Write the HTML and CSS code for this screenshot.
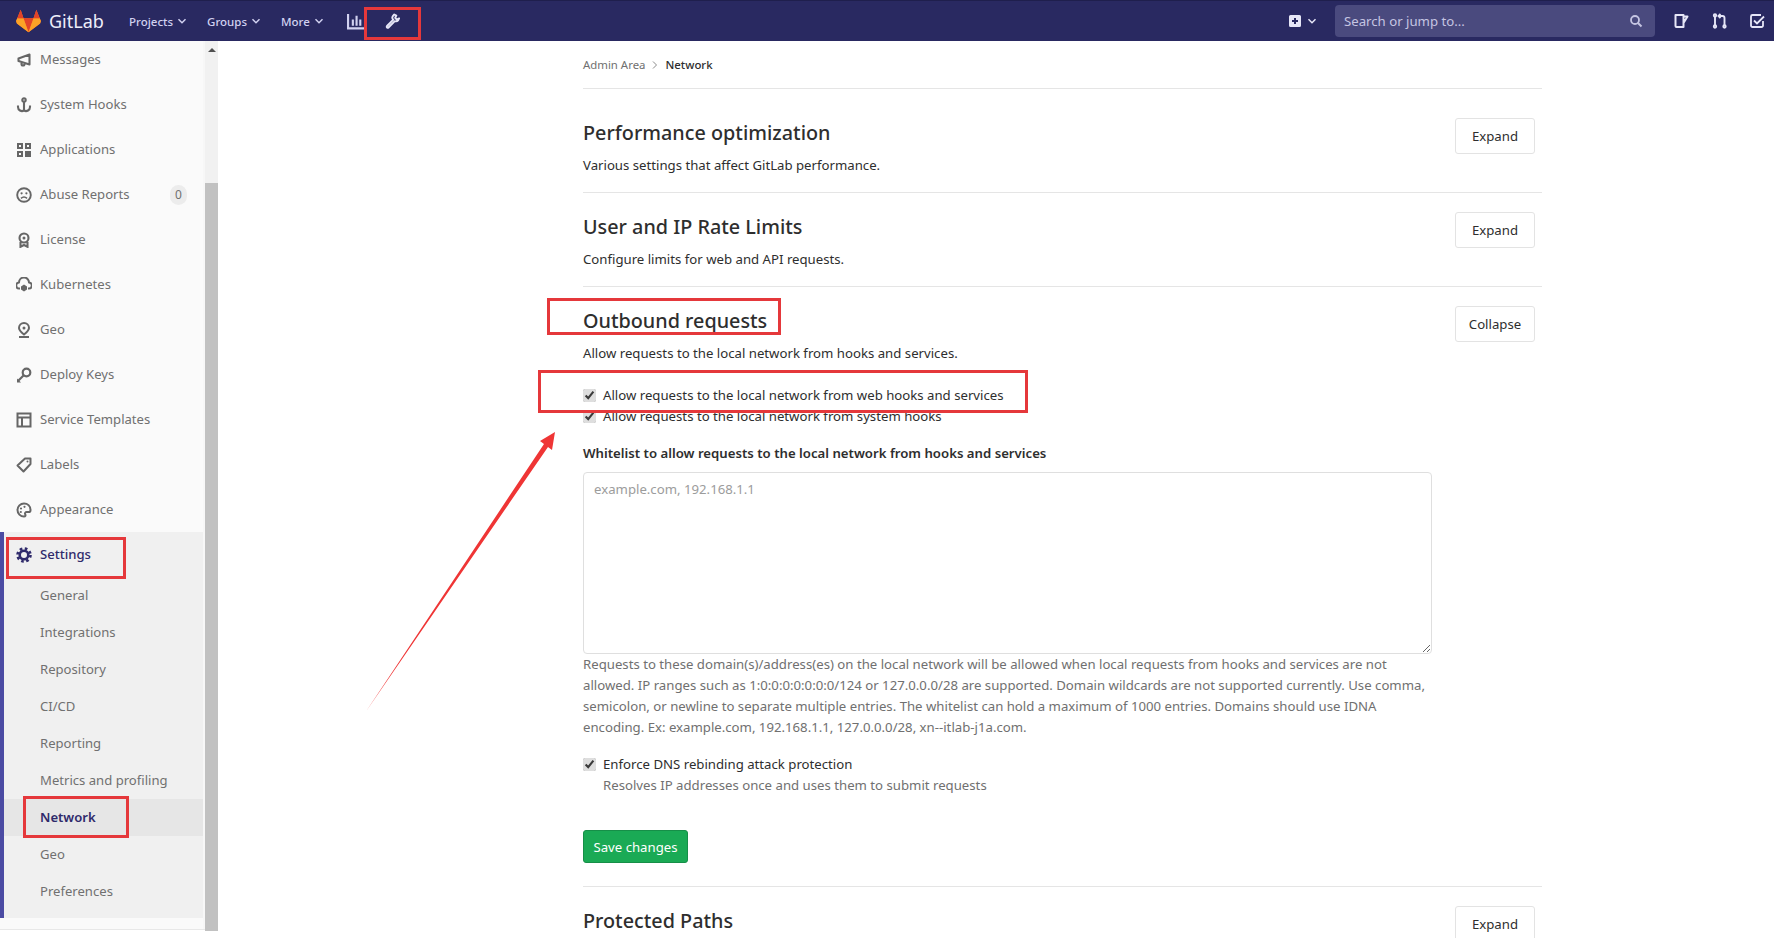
FILE: index.html
```html
<!DOCTYPE html>
<html lang="en">
<head>
<meta charset="utf-8">
<title>Network · Admin Area · GitLab</title>
<link rel="stylesheet" href="styles.css">
</head>
<body>
<svg class="sprite" width="0" height="0" aria-hidden="true">
  <symbol id="chev" viewBox="0 0 10 10"><path d="M1.5 3.3 5 6.8l3.5-3.5" fill="none" stroke="currentColor" stroke-width="1.5"/></symbol>
</svg>
<header class="topbar">
  <div class="brand">
    <svg class="logo" viewBox="0 0 28 26"><path fill="#fc6d26" d="M14 25.500 1 15.800.1 12.900 5.200.4l3.200 9.500h11.200L22.800.4l5.100 12.500-.9 2.900z"/><path fill="#e24329" d="M14 25.500 8.400 9.900h11.200z"/><path fill="#fca326" d="M1 15.800 14 25.500 8.400 9.900H1.500l-1.400 3zM27 15.800 14 25.500l5.600-15.600h6.900l1.400 3z"/><path fill="#e24329" d="M1.500 9.900h6.900L5.200.4zM26.500 9.900h-6.900L22.800.4z"/></svg>
    <span class="brand-name">GitLab</span>
  </div>
  <nav class="nav-left">
    <a class="nav-item">Projects <svg class="chev"><use href="#chev"/></svg></a>
    <a class="nav-item">Groups <svg class="chev"><use href="#chev"/></svg></a>
    <a class="nav-item">More <svg class="chev"><use href="#chev"/></svg></a>
    <svg class="nav-icon chart" viewBox="0 0 16 16"><path fill="none" stroke="currentColor" stroke-width="2" d="M1 1v13.500h15M5.500 6v6M9 2.500V12M12.500 6v6"/></svg>
    <svg class="nav-icon wrench" viewBox="0 0 16 16"><path fill="none" stroke="currentColor" stroke-width="1.900" stroke-linejoin="round" d="M10.300 1.500 8.800 3.200c-.8 1.300-.4 2.700.5 3.500L3 13a1.300 1.300 0 0 0 0 1.500c.5.400 1.100.4 1.500 0l6.300-6.400c1.200.5 2.500.2 3.300-.7l1-2-2.300 1.100-1.600-1.600 1.100-2.400z"/></svg>
  </nav>
  <div class="nav-right">
    <span class="plus-group">
      <svg class="plus" viewBox="0 0 14 14"><path fill="currentColor" fill-rule="evenodd" d="M2.500 1h9A1.500 1.500 0 0 1 13 2.500v9a1.500 1.500 0 0 1-1.500 1.500h-9A1.500 1.500 0 0 1 1 11.500v-9A1.500 1.500 0 0 1 2.500 1zM6 4v2H4v2h2v2h2V8h2V6H8V4z"/></svg>
      <svg class="chev"><use href="#chev"/></svg>
    </span>
    <div class="search">
      <span>Search or jump to...</span>
      <svg class="search-icon" viewBox="0 0 14 14"><circle cx="6" cy="6" r="4" fill="none" stroke="currentColor" stroke-width="1.800"/><path d="m9 9 3.500 3.500" stroke="currentColor" stroke-width="2"/></svg>
    </div>
    <svg class="nav-icon issue" viewBox="0 0 16 16"><path fill="none" stroke="currentColor" stroke-width="2" stroke-linejoin="round" d="M2.500 2h8v12h-7a1 1 0 0 1-1-1zM10.500 3.500H14.500L10.500 10"/></svg>
    <svg class="nav-icon mr" viewBox="0 0 16 16"><g fill="none" stroke="currentColor" stroke-width="1.900"><path d="M3 3.500v9"/><circle cx="3" cy="2.500" r="1.200"/><circle cx="3" cy="13.500" r="1.200"/><path d="M8.500 1 6.500 3l2 2M7 3h3.500A2 2 0 0 1 12.500 5v7"/><circle cx="12.500" cy="13.500" r="1.200"/></g></svg>
    <svg class="nav-icon todo" viewBox="0 0 16 16"><g fill="none" stroke="currentColor" stroke-width="1.800"><path d="M14 8v4.500a1.500 1.500 0 0 1-1.500 1.500h-9A1.500 1.500 0 0 1 2 12.500v-9A1.500 1.500 0 0 1 3.500 2H12"/><path d="m5 7.500 3 3L15 3.500"/></g></svg>
  </div>
</header>

<div class="layout">
  <aside class="sidebar">
    <div class="side-scroll">
      <ul class="side-list">
        <li class="side-row"><svg class="side-icon" viewBox="0 0 16 16"><path fill="none" stroke="currentColor" stroke-width="2.100" stroke-linejoin="round" d="M13.500 2.500v10L2.500 9V6.500zM5.500 10v2a1.500 1.500 0 0 0 3 0v-1"/></svg>Messages</li>
        <li class="side-row"><svg class="side-icon" viewBox="0 0 16 16"><g fill="none" stroke="currentColor" stroke-width="2.100"><circle cx="8" cy="3" r="1.700"/><path d="M8 5v9M2 8.500V10a4 4 0 0 0 6 3.500A4 4 0 0 0 14 10V8.500"/></g></svg>System Hooks</li>
        <li class="side-row"><svg class="side-icon" viewBox="0 0 16 16"><path fill="currentColor" fill-rule="evenodd" d="M1 1h6v6H1zM3 3v2h2V3zM9 1h6v6H9zM11 3v2h2V3zM1 9h6v6H1zM3 11v2h2v-2zM9 9h6v6H9z"/></svg>Applications</li>
        <li class="side-row"><svg class="side-icon" viewBox="0 0 16 16"><circle cx="8" cy="8" r="6.800" fill="none" stroke="currentColor" stroke-width="1.900"/><circle cx="5.600" cy="6.300" r="1.100" fill="currentColor"/><circle cx="10.400" cy="6.300" r="1.100" fill="currentColor"/><path d="M5 11.300c1.800-1.600 4.200-1.600 6 0" fill="none" stroke="currentColor" stroke-width="1.600"/></svg>Abuse Reports<span class="badge">0</span></li>
        <li class="side-row"><svg class="side-icon" viewBox="0 0 16 16"><g fill="none" stroke="currentColor" stroke-width="2.100"><circle cx="8" cy="6" r="4.500"/><path d="M4.500 10v4.800L8 13l3.500 1.800V10"/></g><circle cx="8" cy="6" r="1.500" fill="currentColor"/></svg>License</li>
        <li class="side-row"><svg class="side-icon" viewBox="0 0 16 16"><path fill="none" stroke="currentColor" stroke-width="2" stroke-linejoin="round" d="M4 11.500H3.500A3 3 0 0 1 3 5.500a5 5 0 0 1 10 0 3 3 0 0 1-.5 6H12"/><path fill="currentColor" d="m8 7.500 3 2v3l-3 2-3-2v-3z"/></svg>Kubernetes</li>
        <li class="side-row"><svg class="side-icon" viewBox="0 0 16 16"><g fill="none" stroke="currentColor" stroke-width="2"><path d="M8 12.500C5.500 10.500 3 8.500 3 6a5 5 0 0 1 10 0c0 2.500-2.500 4.500-5 6.500z"/><path d="M3 15h10"/></g><circle cx="8" cy="6" r="1.500" fill="currentColor"/></svg>Geo</li>
        <li class="side-row"><svg class="side-icon" viewBox="0 0 16 16"><g fill="none" stroke="currentColor" stroke-width="2.200"><circle cx="10.500" cy="5.500" r="3.800"/><path d="M7.500 8.500 2 14"/></g><path d="M1 11.500v4h4z" fill="currentColor"/></svg>Deploy Keys</li>
        <li class="side-row"><svg class="side-icon" viewBox="0 0 16 16"><path fill="none" stroke="currentColor" stroke-width="2" d="M1.500 1.500h13v13h-13zM1.500 5.500h13M6 5.500v9"/></svg>Service Templates</li>
        <li class="side-row"><svg class="side-icon" viewBox="0 0 16 16"><path fill="none" stroke="currentColor" stroke-width="2" stroke-linejoin="round" d="M9 1.500h5.500V7L7.500 14.500 1.500 8.500z"/><circle cx="11.500" cy="4.500" r="1" fill="currentColor"/></svg>Labels</li>
        <li class="side-row"><svg class="side-icon" viewBox="0 0 16 16"><path fill="none" stroke="currentColor" stroke-width="2" d="M8 1.500a6.500 6.500 0 1 0 0 13c1.500 0 1.800-1.200 1.200-2.200-.6-1.100.2-2.300 1.500-2.300h2.200c1 0 1.600-.7 1.600-1.800C14.500 4 11.500 1.500 8 1.500z"/><circle cx="5" cy="6.500" r="1.100" fill="currentColor"/><circle cx="8.500" cy="4.800" r="1.100" fill="currentColor"/><circle cx="4.800" cy="10" r="1.100" fill="currentColor"/></svg>Appearance</li>
        <li class="side-group">
          <div class="side-row active-head"><svg class="side-icon" viewBox="0 0 16 16"><g fill="none" stroke="currentColor"><circle cx="8" cy="8" r="4.300" stroke-width="2.600"/><circle cx="8" cy="8" r="6.500" stroke-width="2.600" stroke-dasharray="2.600 2.510"/></g></svg>Settings</div>
          <ul class="sub-list">
            <li class="sub-row">General</li>
            <li class="sub-row">Integrations</li>
            <li class="sub-row">Repository</li>
            <li class="sub-row">CI/CD</li>
            <li class="sub-row">Reporting</li>
            <li class="sub-row">Metrics and profiling</li>
            <li class="sub-row current">Network</li>
            <li class="sub-row">Geo</li>
            <li class="sub-row">Preferences</li>
          </ul>
        </li>
      </ul>
    </div>
    <div class="scrollbar"><span class="scroll-up"></span><span class="scroll-thumb"></span></div>
  </aside>

  <main class="content">
    <div class="breadcrumb"><span class="crumb-muted">Admin Area</span><svg class="crumb-sep" viewBox="0 0 6 10"><path d="m1 1.500 3.500 3.500L1 8.500" fill="none" stroke="currentColor"/></svg><span class="crumb-current">Network</span></div>

    <section class="panel">
      <div class="panel-text"><h2>Performance optimization</h2><p>Various settings that affect GitLab performance.</p></div>
      <button class="btn">Expand</button>
    </section>
    <section class="panel">
      <div class="panel-text"><h2>User and IP Rate Limits</h2><p>Configure limits for web and API requests.</p></div>
      <button class="btn">Expand</button>
    </section>
    <section class="panel open">
      <div class="panel-head">
        <div class="panel-text"><h2>Outbound requests</h2><p>Allow requests to the local network from hooks and services.</p></div>
        <button class="btn">Collapse</button>
      </div>
      <form class="outbound">
        <label class="check first"><input type="checkbox" checked>Allow requests to the local network from web hooks and services</label>
        <label class="check"><input type="checkbox" checked>Allow requests to the local network from system hooks</label>
        <label class="field-label" for="wl">Whitelist to allow requests to the local network from hooks and services</label>
        <textarea id="wl" placeholder="example.com, 192.168.1.1"></textarea>
        <p class="help">Requests to these domain(s)/address(es) on the local network will be allowed when local requests from hooks and services are not allowed. IP ranges such as 1:0:0:0:0:0:0:0/124 or 127.0.0.0/28 are supported. Domain wildcards are not supported currently. Use comma, semicolon, or newline to separate multiple entries. The whitelist can hold a maximum of 1000 entries. Domains should use IDNA encoding. Ex: example.com, 192.168.1.1, 127.0.0.0/28, xn--itlab-j1a.com.</p>
        <label class="check dns"><input type="checkbox" checked>Enforce DNS rebinding attack protection</label>
        <p class="help indent">Resolves IP addresses once and uses them to submit requests</p>
        <button class="btn-save" type="button">Save changes</button>
      </form>
    </section>
    <section class="panel">
      <div class="panel-text"><h2>Protected Paths</h2></div>
      <button class="btn">Expand</button>
    </section>
  </main>
</div>

<div class="mark mark-wrench"></div>
<div class="mark mark-outbound"></div>
<div class="mark mark-allow"></div>
<div class="mark mark-settings"></div>
<div class="mark mark-network"></div>
<svg class="arrow" viewBox="0 0 1774 938"><path fill="#ef3535" d="M367 710 544 444 540 441 555 432 552 450 548 447z"/></svg>
</body>
</html>
```
FILE: styles.css
```css
* { box-sizing: border-box; }
html, body { height: 100%; }
body {
  margin: 0;
  overflow: hidden;
  background: #fff;
  color: #2e2e2e;
  font: 13.200px/21px "Noto Sans", "Open Sans", sans-serif;
  position: relative;
}
ul { list-style: none; margin: 0; padding: 0; }
h2, p { margin: 0; }
.sprite { position: absolute; }

.topbar {
  position: relative;
  z-index: 2;
  height: 41px;
  display: flex;
  align-items: center;
  background: #292961;
  border-top: 1px solid #1f1f4d;
  color: #d1d1f0;
}
.brand { display: flex; align-items: center; width: 129px; padding-left: 16px; flex: none; }
.logo { width: 25px; height: 24px; flex: none; }
.brand-name { margin-left: 8px; color: #eeeefa; font-size: 18px; }
.nav-left { display: flex; align-items: center; flex: 1; font-size: 11.500px; font-weight: 500; }
.nav-item { display: inline-flex; align-items: center; gap: 4px; margin-right: 20px; }
.chev { width: 10px; height: 10px; flex: none; }
.nav-icon { flex: none; width: 16px; height: 16px; }
.chart { width: 17px; height: 17px; margin-left: 3px; }
.wrench { margin-left: 20px; color: #e6e6f7; }
.nav-right { display: flex; align-items: center; flex: none; padding-right: 9px; }
.plus-group { display: flex; align-items: center; gap: 5px; margin-right: 18px; margin-left: -1px; color: #e6e6f7; }
.plus { width: 14px; height: 14px; }
.search {
  width: 320px;
  height: 32px;
  border-radius: 4px;
  background: #4a4a7e;
  display: flex;
  align-items: center;
  justify-content: space-between;
  padding: 0 12px 0 9px;
  color: #c5c5e2;
  margin-right: 18px;
}
.search-icon { width: 14px; height: 14px; }
.issue { margin-right: 23px; color: #e6e6f7; }
.mr { margin-right: 21px; color: #e6e6f7; }
.todo { color: #e6e6f7; }

.layout { display: flex; height: 889px; }
.sidebar { flex: none; width: 218px; height: 889px; display: flex; border-bottom: 1px solid #e8e8e8; }
.side-scroll { width: 205px; background: #fafafa; overflow: hidden; color: #707070; border-right: 2px solid #f7f7f7; }
.side-list { margin-top: -4px; }
.side-row { height: 45px; display: flex; align-items: center; padding-left: 16px; font-size: 13.100px; }
.side-icon { width: 16px; height: 16px; flex: none; margin-right: 8px; color: #666; }
.badge {
  margin-left: auto;
  margin-right: 16px;
  width: 17px;
  height: 20px;
  border-radius: 9px;
  background: #ececec;
  text-align: center;
  font-size: 12px;
  line-height: 20px;
}
.side-group { background: #f0f0f0; border-left: 4px solid #4b4ba3; padding-bottom: 8px; }
.side-group .side-row { padding-left: 12px; }
.active-head { color: #2f2a6b; font-weight: 500; }
.active-head .side-icon { color: #2f2a6b; }
.sub-row { height: 37px; display: flex; align-items: center; padding-left: 36px; font-size: 13.100px; }
.current { background: #e6e6e6; color: #2f2a6b; font-weight: 600; }
.scrollbar { width: 13px; background: #f1f1f1; position: relative; }
.scroll-up {
  display: block;
  width: 0;
  margin: 7px auto 0;
  border: 4px solid transparent;
  border-top: 0;
  border-bottom: 4px solid #505050;
}
.scroll-thumb { display: block; height: 748px; margin-top: 131px; background: #c1c1c1; }

.content { flex: none; width: 959px; margin-left: 365px; }
.breadcrumb {
  height: 48px;
  display: flex;
  align-items: center;
  font-size: 11.400px;
  border-bottom: 1px solid #e5e5e5;
}
.crumb-muted { color: #707070; }
.crumb-sep { width: 6px; height: 10px; margin: 0 7px; color: #8c8c8c; }
.crumb-current { color: #2e2e2e; font-weight: 500; }
.panel {
  display: flex;
  justify-content: space-between;
  padding: 21px 7px 0 0;
  height: 94px;
  border-bottom: 1px solid #e5e5e5;
  position: relative;
}
.panel:nth-of-type(1) { height: 104px; padding-top: 31px; }
.panel h2 { font-size: 19.800px; line-height: 26px; font-weight: 500; color: #2e2e2e; }
.panel p { margin-top: 9px; }
.panel.open { display: block; height: 600px; }
.panel-head { display: flex; justify-content: space-between; }
.btn {
  height: 36px;
  width: 80px;
  margin-top: -2px;
  background: #fff;
  border: 1px solid #e3e3e3;
  border-radius: 3px;
  color: #2e2e2e;
  font: 13.200px "Noto Sans", sans-serif;
}
.check { display: flex; align-items: center; height: 21px; }
.check input {
  width: 13px;
  height: 13px;
  margin: 0 7px 0 0;
  accent-color: #dedede;
}
.first { margin-top: 21px; }
.field-label { display: block; margin-top: 16px; font-weight: 600; }
textarea {
  display: block;
  width: 849px;
  height: 182px;
  margin-top: 8px;
  padding: 6px 10px;
  border: 1px solid #dfdfdf;
  border-radius: 4px;
  font: 13.200px/21px "Noto Sans", sans-serif;
  color: #2e2e2e;
  background: #fff;
  outline: 0;
}
textarea::placeholder { color: #9c9c9c; }
.panel .help { margin-top: 0; color: #707070; width: 849px; }
.dns { margin-top: 16px; }
.panel .indent { padding-left: 20px; }
.btn-save {
  display: block;
  width: 105px;
  height: 33px;
  margin-top: 34px;
  padding: 0;
  background: #1aaa55;
  border: 1px solid #168f48;
  border-radius: 3px;
  color: #fff;
  font: 13.200px "Noto Sans", sans-serif;
}

.mark { position: absolute; border: 3px solid #e5383b; z-index: 3; pointer-events: none; }
.mark-wrench { left: 364px; top: 7px; width: 57px; height: 33px; }
.mark-outbound { left: 547px; top: 298px; width: 234px; height: 37px; }
.mark-allow { left: 538px; top: 370px; width: 490px; height: 43px; }
.mark-settings { left: 6px; top: 537px; width: 120px; height: 42px; }
.mark-network { left: 23px; top: 796px; width: 106px; height: 42px; }
.arrow { position: absolute; inset: 0; width: 1774px; height: 938px; z-index: 3; pointer-events: none; }
```
